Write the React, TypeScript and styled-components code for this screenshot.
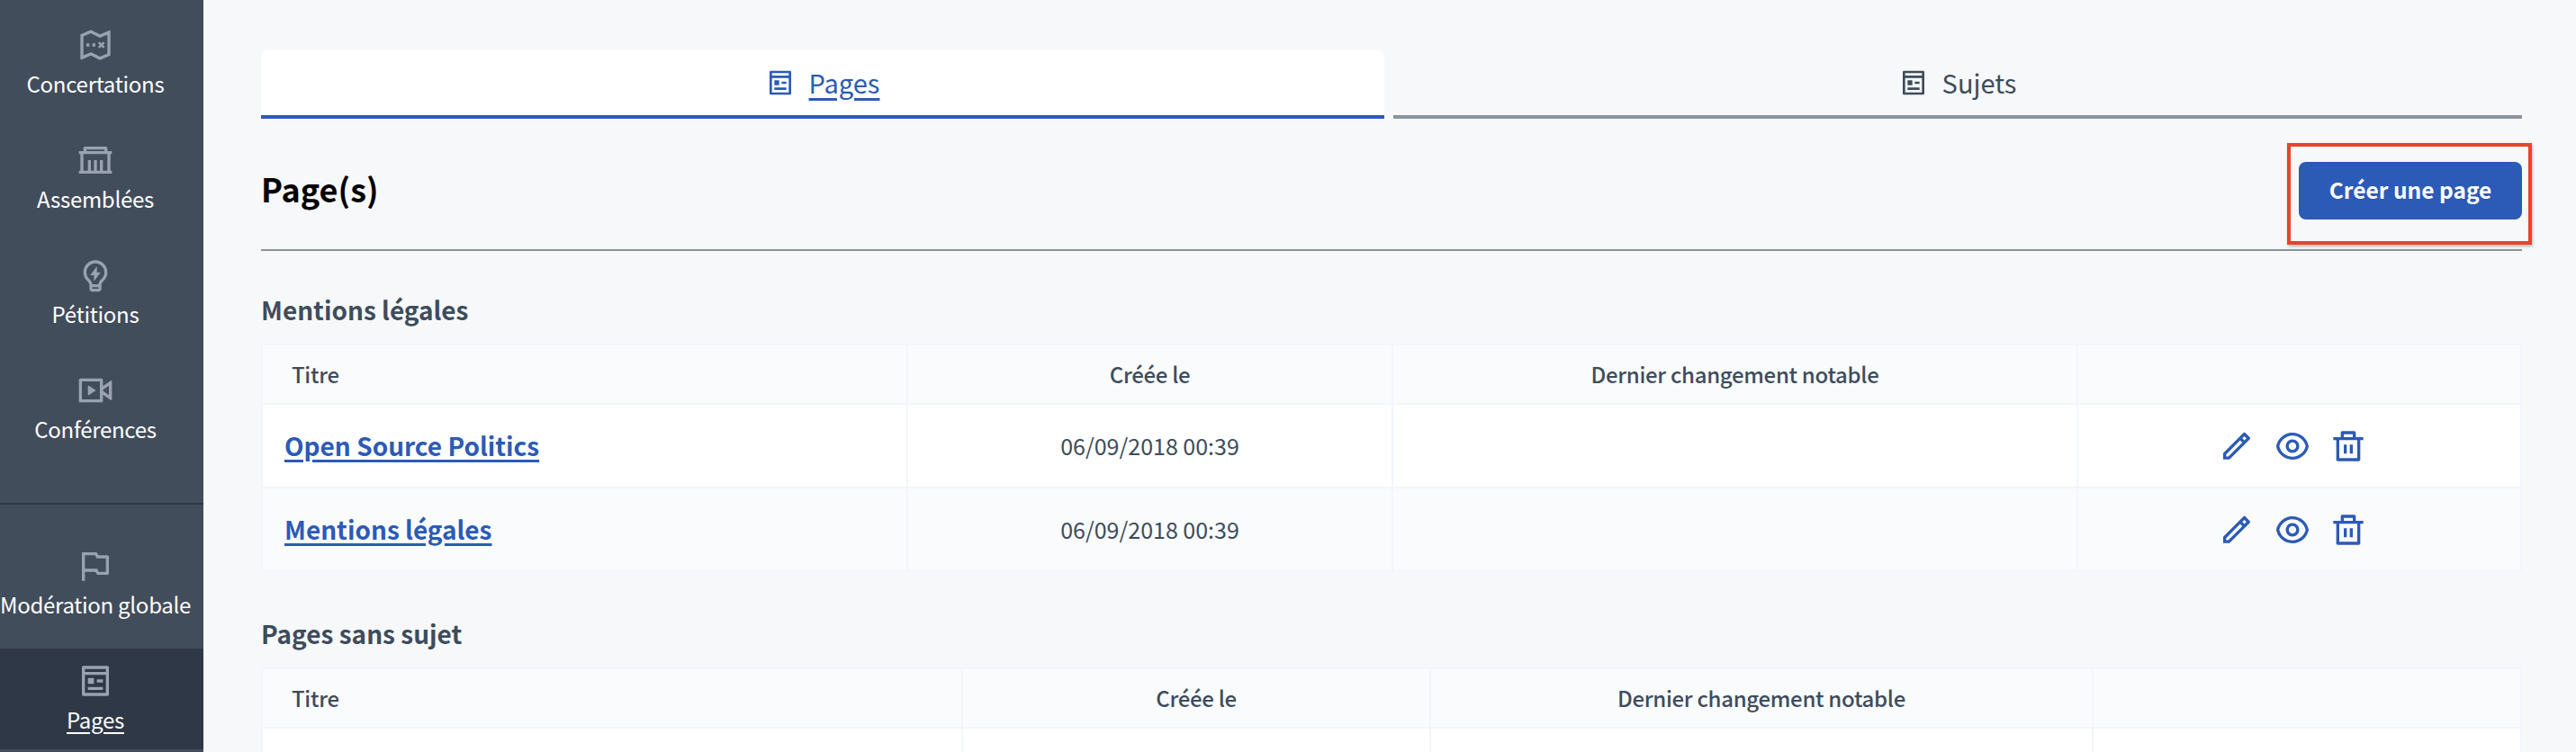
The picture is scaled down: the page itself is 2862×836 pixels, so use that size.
import React from "react";
import styled, { createGlobalStyle } from "styled-components";
import {
  RiTreasureMapLine,
  RiGovernmentLine,
  RiLightbulbFlashLine,
  RiLiveLine,
  RiFlagLine,
  RiPagesLine,
  RiPencilLine,
  RiEyeLine,
  RiDeleteBinLine,
} from "react-icons/ri";

const blue = "#2c5ab7";
const ink = "#3e4c5c";
const line = "#f2f5fc";

const Global = createGlobalStyle`
  html, body { margin: 0; padding: 0; height: 836px; overflow: hidden; background: #f7f8fa; }
  body { font-family: "Noto Sans CJK SC", "Noto Sans", sans-serif; }
  * { box-sizing: border-box; }
`;

const Page = styled.div`
  display: flex;
  width: 2862px;
  height: 836px;
  overflow: hidden;
`;

const Sidebar = styled.nav`
  flex: 0 0 226px;
  width: 226px;
  min-width: 0;
  height: 836px;
  background: #424d5b;
  padding-top: 14px;
  display: flex;
  flex-direction: column;
`;

const NavGroup = styled.div`
  display: flex;
  flex-direction: column;
  gap: 16px;
`;

const NavDivider = styled.div`
  height: 2px;
  background: #2f3946;
  margin: 49px 0 32px;
`;

const NavItem = styled.a<{ $active?: boolean }>`
  height: 112px;
  display: flex;
  flex-direction: column;
  align-items: center;
  padding: 16px 14px 0 0;
  color: #fff;
  font-size: 24px;
  letter-spacing: -0.28px;
  line-height: 45px;
  white-space: nowrap;
  background: ${(p) => (p.$active ? "#2f3846" : "transparent")};
  text-decoration: ${(p) => (p.$active ? "underline" : "none")};
  text-decoration-thickness: 2px;
  text-underline-offset: 4px;
  svg { width: 40px; height: 40px; color: #98a2b1; flex: none; }
`;

const Main = styled.main`
  flex: 1;
  min-width: 0;
  padding: 56px 60px 0 64px;
`;

const Tabs = styled.div`
  display: grid;
  grid-template-columns: 1248px 1254px;
  gap: 10px;
`;

const Tab = styled.a<{ $active?: boolean }>`
  height: 76px;
  display: flex;
  align-items: center;
  justify-content: center;
  gap: 16px;
  font-size: 29px;
  border-radius: 8px 8px 0 0;
  border-bottom: 4px solid ${(p) => (p.$active ? blue : "#8c929e")};
  background: ${(p) => (p.$active ? "#fff" : "transparent")};
  color: ${(p) => (p.$active ? blue : ink)};
  text-decoration: ${(p) => (p.$active ? "underline" : "none")};
  text-decoration-thickness: 3px;
  text-underline-offset: 5px;
  svg { width: 32px; height: 32px; }
  span { margin-bottom: 3px; }
`;

const Header = styled.header`
  height: 147px;
  border-bottom: 2px solid #8c929e;
  display: flex;
  align-items: flex-start;
  justify-content: space-between;
  padding-top: 48px;
  margin-bottom: 42px;
`;

const Title = styled.h1`
  margin: 0;
  font-size: 36px;
  line-height: 58px;
  font-weight: 700;
  color: #000;
`;

const ButtonWrap = styled.div`
  position: relative;
  display: flex;
`;

const Button = styled.a`
  width: 248px;
  height: 64px;
  padding-bottom: 3px;
  display: flex;
  align-items: center;
  justify-content: center;
  border-radius: 8px;
  background: ${blue};
  color: #fff;
  font-size: 24.5px;
  font-weight: 700;
`;

const Annotation = styled.div`
  position: absolute;
  left: -13px;
  top: -21px;
  width: 272px;
  height: 113px;
  border: 4px solid #ea4329;
  box-shadow: 1px 2px 3px rgba(0, 0, 0, 0.25);
`;

const SectionTitle = styled.h2`
  margin: 0;
  font-size: 28px;
  line-height: 46px;
  font-weight: 700;
  color: ${ink};
  margin-bottom: 15px;
`;

const Table = styled.section`
  border: 2px solid ${line};
  margin-bottom: 45px;
`;

const Row = styled.div<{ $cols: string; $head?: boolean; $alt?: boolean; $h: number }>`
  display: grid;
  grid-template-columns: ${(p) => p.$cols};
  height: ${(p) => p.$h}px;
  background: ${(p) => (p.$head || p.$alt ? "#fafbfd" : "#fff")};
  & + & { margin-top: 2px; box-shadow: 0 -2px 0 ${line}; }
`;

const Cell = styled.div<{ $head?: boolean; $center?: boolean }>`
  display: flex;
  align-items: center;
  justify-content: ${(p) => (p.$center ? "center" : "flex-start")};
  padding-left: ${(p) => (p.$center ? 0 : p.$head ? 32 : 24)}px;
  padding-bottom: 2px;
  border-right: 2px solid ${line};
  font-size: ${(p) => (p.$head ? 24 : 25)}px;
  letter-spacing: ${(p) => (p.$head ? "-0.3px" : "0")};
  font-weight: ${(p) => (p.$head ? 500 : 400)};
  color: ${ink};
  &:last-child { border-right: 0; }
`;

const PageLink = styled.a`
  color: ${blue};
  font-size: 28px;
  font-weight: 700;
  text-decoration: underline;
  text-decoration-thickness: 3px;
  text-underline-offset: 4px;
`;

const Actions = styled.div`
  display: flex;
  gap: 22px;
  padding-right: 16px;
  margin-top: 2px;
  color: ${blue};
  svg { width: 40px; height: 40px; display: block; }
`;

const Item = ({ icon, label, active }: { icon: React.ReactNode; label: string; active?: boolean }) => (
  <NavItem $active={active}>
    {icon}
    <span>{label}</span>
  </NavItem>
);

const Head = ({ cols }: { cols: string }) => (
  <Row $cols={cols} $head $h={64}>
    <Cell $head>Titre</Cell>
    <Cell $head $center>Créée le</Cell>
    <Cell $head $center>Dernier changement notable</Cell>
    <Cell $head />
  </Row>
);

const Entry = ({ cols, title, alt }: { cols: string; title: string; alt?: boolean }) => (
  <Row $cols={cols} $alt={alt} $h={91}>
    <Cell><PageLink>{title}</PageLink></Cell>
    <Cell $center>06/09/2018 00:39</Cell>
    <Cell />
    <Cell $center>
      <Actions>
        <RiPencilLine />
        <RiEyeLine />
        <RiDeleteBinLine />
      </Actions>
    </Cell>
  </Row>
);

const colsA = "717px 539px 761px 491px";
const colsB = "778px 520px 736px 474px";

export default function App() {
  return (
    <Page>
      <Global />
      <Sidebar>
        <NavGroup>
          <Item icon={<RiTreasureMapLine />} label="Concertations" />
          <Item icon={<RiGovernmentLine />} label="Assemblées" />
          <Item icon={<RiLightbulbFlashLine />} label="Pétitions" />
          <Item icon={<RiLiveLine />} label="Conférences" />
        </NavGroup>
        <NavDivider />
        <NavGroup>
          <Item icon={<RiFlagLine />} label="Modération globale" />
          <Item icon={<RiPagesLine />} label="Pages" active />
        </NavGroup>
      </Sidebar>
      <Main>
        <Tabs>
          <Tab $active><RiPagesLine /><span>Pages</span></Tab>
          <Tab><RiPagesLine /><span>Sujets</span></Tab>
        </Tabs>
        <Header>
          <Title>Page(s)</Title>
          <ButtonWrap>
            <Button>Créer une page</Button>
            <Annotation />
          </ButtonWrap>
        </Header>
        <SectionTitle>Mentions légales</SectionTitle>
        <Table>
          <Head cols={colsA} />
          <Entry cols={colsA} title="Open Source Politics" />
          <Entry cols={colsA} title="Mentions légales" alt />
        </Table>
        <SectionTitle>Pages sans sujet</SectionTitle>
        <Table>
          <Head cols={colsB} />
          <Row $cols={colsB} $h={91}>
            <Cell /><Cell /><Cell /><Cell />
          </Row>
        </Table>
      </Main>
    </Page>
  );
}
